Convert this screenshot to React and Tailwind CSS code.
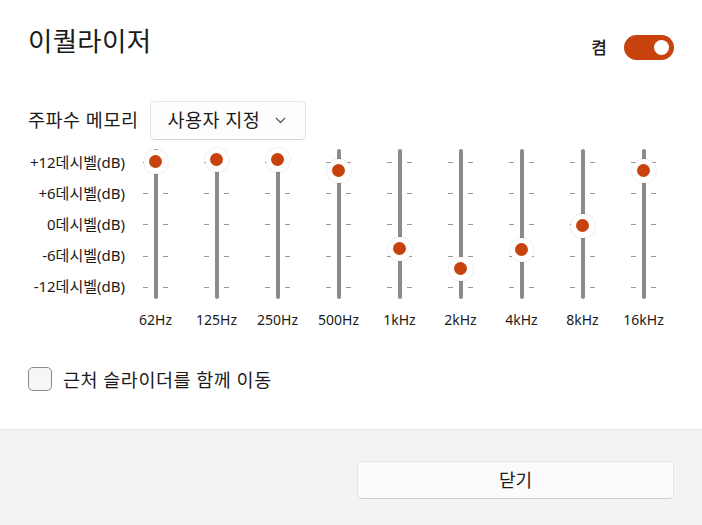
import React, { useState } from 'react';

const FONT = { fontFamily: '"Noto Sans", "Noto Sans CJK KR", sans-serif' };

const dbLabels = ['+12데시벨(dB)', '+6데시벨(dB)', '0데시벨(dB)', '-6데시벨(dB)', '-12데시벨(dB)'];
const tickTops = [13, 44, 75, 107, 138];

// thumb y-offsets measured from the top of the track
const bands = [
  { name: '62Hz', y: 13 },
  { name: '125Hz', y: 11 },
  { name: '250Hz', y: 11 },
  { name: '500Hz', y: 22 },
  { name: '1kHz', y: 100 },
  { name: '2kHz', y: 120 },
  { name: '4kHz', y: 101 },
  { name: '8kHz', y: 77 },
  { name: '16kHz', y: 22 },
];

const Band = ({ y }) => (
  <div className="relative w-[61px] h-[150px] flex justify-center">
    <div className="w-[4px] h-full rounded-full bg-[#8b8b8b]" />
    {tickTops.map((t) => (
      <React.Fragment key={t}>
        <div className="absolute left-[18px] w-[5px] h-px bg-[#9a9a9a]" style={{ top: t }} />
        <div className="absolute right-[18px] w-[5px] h-px bg-[#9a9a9a]" style={{ top: t }} />
      </React.Fragment>
    ))}
    <div
      className="absolute left-1/2 -translate-x-1/2 -translate-y-1/2 w-[24px] h-[24px] rounded-full bg-white shadow-[0_0_2px_rgba(0,0,0,0.18)] flex items-center justify-center"
      style={{ top: y }}
    >
      <div className="w-[13px] h-[13px] rounded-full bg-[#c8420e]" />
    </div>
  </div>
);

const App = () => {
  const [on, setOn] = useState(true);
  const [linked, setLinked] = useState(false);

  return (
    <div className="w-[702px] h-[525px] bg-white flex flex-col text-[#1b1b1b]" style={FONT}>
      <div className="flex-1 px-[28px]">
        <div className="flex items-start justify-between pt-[24px]">
          <h1 className="text-[26.5px] leading-[34px] font-normal tracking-[0.3px]">이퀄라이저</h1>
          <div className="flex items-center gap-[17px] mt-[11px]">
            <span className="text-[17px] font-medium">켬</span>
            <button
              onClick={() => setOn(!on)}
              className={`w-[50px] h-[25px] rounded-full flex items-center px-[5px] ${on ? 'bg-[#c8420e] justify-end' : 'bg-white border border-gray-500 justify-start'}`}
            >
              <span className={`w-[15px] h-[15px] rounded-full ${on ? 'bg-white' : 'bg-gray-600'}`} />
            </button>
          </div>
        </div>

        <div className="flex items-center gap-[12px] mt-[40px]">
          <span className="text-[18.5px] tracking-[0.5px]">주파수 메모리</span>
          <button className="w-[156px] h-[39px] flex items-center justify-between pl-[16px] pr-[19px] rounded-[5px] border border-[#e5e5e5] border-b-[#d3d3d3] bg-[#fdfdfd] text-[18.5px] tracking-[0.5px]">
            <span>사용자 지정</span>
            <svg width="11" height="7" viewBox="0 0 11 7" fill="none">
              <path d="M1 1l4.5 4.5L10 1" stroke="#5a5a5a" strokeWidth="1.3" />
            </svg>
          </button>
        </div>

        <div className="flex mt-[9px]">
          <div className="w-[97px] h-[150px] flex flex-col justify-between items-end py-[3px] text-[15px] leading-[20px]">
            {dbLabels.map((l) => (
              <span key={l}>{l}</span>
            ))}
          </div>
          <div className="flex flex-col">
            <div className="flex">
              {bands.map((b) => (
                <Band key={b.name} y={b.y} />
              ))}
            </div>
            <div className="flex mt-[11px]">
              {bands.map((b) => (
                <span key={b.name} className="w-[61px] text-center text-[14px] leading-[20px]">
                  {b.name}
                </span>
              ))}
            </div>
          </div>
        </div>

        <label className="flex items-center gap-[11px] mt-[36px] cursor-pointer">
          <button
            onClick={() => setLinked(!linked)}
            className="w-[24px] h-[24px] rounded-[5px] border border-[#8a8a8a] bg-[#f6f6f6]"
          />
          <span className="text-[18.5px] tracking-[0.5px]">근처 슬라이더를 함께 이동</span>
        </label>
      </div>

      <div className="h-[96px] border-t border-[#e5e5e5] bg-[#f3f3f3] flex justify-end items-start pt-[31px] pr-[28px]">
        <button className="w-[317px] h-[38px] rounded-[5px] bg-[#fbfbfb] border border-[#e5e5e5] border-b-[#d0d0d0] text-[18px]">
          닫기
        </button>
      </div>
    </div>
  );
};

export default App;
